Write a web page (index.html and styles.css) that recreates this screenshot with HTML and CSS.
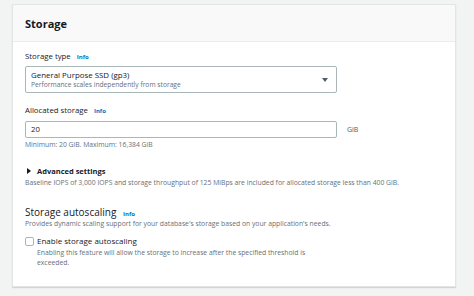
FILE: index.html
```html
<!DOCTYPE html>
<html>
<head>
  <meta name="viewport" content="width=device-width, initial-scale=1">
  <link rel="stylesheet" href="styles.css">
</head>
<body>
  <div class="card">
    <div class="card-header">
      <h2>Storage</h2>
    </div>

    <div class="card-body">
      <div class="field">
        <label class="label">Storage type <a class="info">Info</a></label>
        <div class="select">
          <div>
            <div class="select-main">General Purpose SSD (gp3)</div>
            <div class="select-sub">Performance scales independently from storage</div>
          </div>
          <span class="caret"></span>
        </div>
      </div>

      <div class="field">
        <label class="label">Allocated storage <a class="info">Info</a></label>
        <div class="input-row">
          <div class="input">20</div>
          <span class="unit">GiB</span>
        </div>
        <div class="hint">Minimum: 20 GiB. Maximum: 16,384 GiB</div>
      </div>

      <div class="expander">
        <span class="tri"></span>Advanced settings
      </div>
      <div class="hint">Baseline IOPS of 3,000 IOPS and storage throughput of 125 MiBps are included for allocated storage less than 400 GiB.</div>

      <div class="autoscale">
        <div class="subtitle">Storage autoscaling <a class="info">Info</a></div>
        <div class="hint">Provides dynamic scaling support for your database's storage based on your application's needs.</div>
        <div class="check-row">
          <span class="box"></span>
          <div>
            <div class="check-label">Enable storage autoscaling</div>
            <div class="hint">Enabling this feature will allow the storage to increase after the specified threshold is<br>exceeded.</div>
          </div>
        </div>
      </div>
    </div>
  </div>
</body>
</html>
```

FILE: styles.css
```css
body {
  margin: 0;
  padding: 4px 18px 9px 12px;
  background: #f2f3f3;
  font-family: "Open Sans", "Noto Sans", sans-serif;
  color: #16191f;
}

.card {
  background: #fff;
  border: 1px solid #e3e5e5;
  box-shadow: 0 1px 1px rgba(0,0,0,0.12);
  height: 283px;
  box-sizing: border-box;
}

.card-header {
  background: #f9f9f9;
  border-bottom: 1px solid #eaeded;
  height: 36px;
  display: flex;
  align-items: center;
  padding-left: 12px;
}
.card-header h2 { margin: 0; font-size: 11px; font-weight: 700; }

.card-body { padding: 9px 12px 0 12px; }

.label { display: block; font-size: 7.8px; line-height: 10px; margin-bottom: 4px; }
.info { color: #0073bb; font-weight: 700; font-size: 6px; margin-left: 4px; }

.field { margin-bottom: 12px; }
.field + .field { margin-bottom: 15px; }
.field + .field .label { margin-bottom: 5px; }

.select {
  width: 312px;
  height: 27px;
  box-sizing: border-box;
  border: 1px solid #aab7b8;
  border-radius: 2px;
  display: flex;
  align-items: center;
  justify-content: space-between;
  padding: 0 8px 0 5px;
}
.select-main { font-size: 7.9px; line-height: 10px; }
.select-sub  { font-size: 6.7px; line-height: 9px; color: #687078; }
.caret {
  width: 0; height: 0;
  border-left: 3px solid transparent;
  border-right: 3px solid transparent;
  border-top: 4px solid #545b64;
}

.input-row { display: flex; align-items: center; gap: 10px; }
.input {
  width: 312px;
  height: 17px;
  box-sizing: border-box;
  border: 1px solid #aab7b8;
  border-radius: 2px;
  font-size: 7.8px;
  line-height: 15px;
  padding-left: 5px;
}
.unit { font-size: 7px; color: #545b64; }

.hint { font-size: 6.8px; line-height: 10px; color: #687078; margin-top: 2px; }

.expander {
  font-size: 7.5px;
  font-weight: 700;
  display: flex;
  align-items: center;
  line-height: 12px;
  margin-bottom: -1px;
}
.tri {
  width: 0; height: 0;
  border-top: 3px solid transparent;
  border-bottom: 3px solid transparent;
  border-left: 4px solid #16191f;
  margin: 0 6px 0 2px;
}

.autoscale { margin-top: 19px; }
.subtitle { font-size: 10px; line-height: 10px; }
.subtitle .info { font-size: 6px; }
.autoscale > .hint { margin-top: 0; }

.check-row { display: flex; gap: 3px; margin-top: 6px; }
.box {
  width: 7px; height: 7px;
  border: 1px solid #aab7b8;
  border-radius: 2px;
  margin-top: 2px;
  flex: none;
}
.check-label { font-size: 8px; line-height: 12px; }
.check-row .hint { margin-top: 1px; }
```
